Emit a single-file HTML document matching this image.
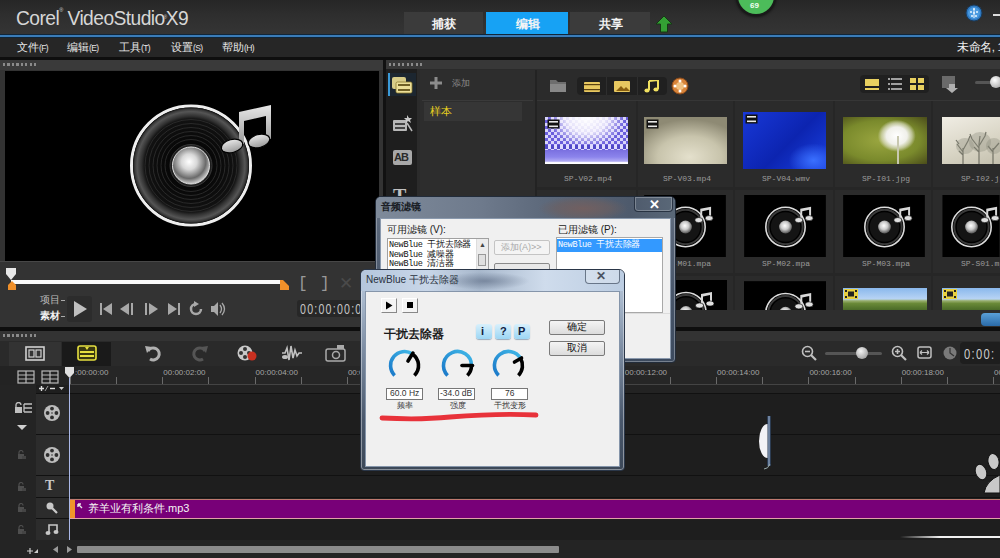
<!DOCTYPE html>
<html><head><meta charset="utf-8">
<style>
*{margin:0;padding:0;box-sizing:border-box}
html,body{width:1000px;height:558px;overflow:hidden;background:#1b1b1b;font-family:"Liberation Sans",sans-serif}
.a{position:absolute}
.t{position:absolute;white-space:nowrap;line-height:1}
</style></head><body>
<!-- title bar -->
<div class="a" style="left:0;top:0;width:1000px;height:36px;background:linear-gradient(#262626,#2e2e2e 40%,#353535)"></div>
<div class="t" style="left:16px;top:7px;font-size:21px;color:#d6d6d6;letter-spacing:-0.6px;transform:scaleX(0.915);transform-origin:0 0">Corel<span style="font-size:6px;vertical-align:top">®</span> VideoStudio<span style="font-size:5px;vertical-align:6px;margin:0 -1px">®</span>X9</div>
<!-- tabs -->
<div class="a" style="left:404px;top:12px;width:79px;height:24px;background:#3b3b3b"></div>
<div class="a" style="left:486px;top:12px;width:82px;height:24px;background:#17a2f4"></div>
<div class="a" style="left:570px;top:12px;width:80px;height:24px;background:#3b3b3b"></div>
<div class="t" style="left:432px;top:18px;font-size:12px;color:#f4f4f4;font-weight:bold">捕获</div>
<div class="t" style="left:516px;top:18px;font-size:12px;color:#f4f4f4;font-weight:bold">编辑</div>
<div class="t" style="left:599px;top:18px;font-size:12px;color:#f4f4f4;font-weight:bold">共享</div>
<svg class="a" style="left:655px;top:15px" width="18" height="18" viewBox="0 0 18 18"><path d="M9 1L17 9H12.5V17H5.5V9H1z" fill="#34a034" stroke="#143a14" stroke-width="1"/></svg>
<!-- green circle -->
<div class="a" style="left:738px;top:-22px;width:36px;height:36px;border-radius:50%;background:#4cbc5a;box-shadow:0 0 0 2px #1a1a1a,0 1px 3px 2px rgba(0,0,0,0.6)"></div>
<div class="t" style="left:750px;top:2px;font-size:8px;color:#f0fff0;font-weight:bold">69</div>
<!-- globe -->
<svg class="a" style="left:965px;top:4px" width="18" height="18" viewBox="0 0 18 18"><circle cx="9" cy="9" r="8" fill="#2e78c0" stroke="#1a3a5a" stroke-width="1"/><circle cx="9" cy="9" r="6" fill="#4a9ae0"/><g fill="#e8f4ff"><circle cx="9" cy="5" r="1"/><circle cx="6" cy="8" r="1"/><circle cx="12" cy="8" r="1"/><circle cx="9" cy="9" r="1"/><circle cx="7" cy="12" r="1"/><circle cx="11" cy="12" r="1"/><rect x="8.5" y="5" width="1" height="9"/></g></svg>
<div class="a" style="left:993px;top:14px;width:7px;height:2px;background:#ddd"></div>
<!-- blue line -->
<div class="a" style="left:0;top:34px;width:1000px;height:4px;background:#10263a"></div><div class="a" style="left:0;top:35px;width:1000px;height:2px;background:#3a7cb8"></div>
<!-- menu bar -->
<div class="a" style="left:0;top:38px;width:1000px;height:20px;background:#262626"></div>
<div class="t" style="left:17px;top:42px;font-size:11px;color:#e6e6e6">文件<span style="font-size:8.5px;letter-spacing:-0.6px">(F)</span></div>
<div class="t" style="left:67px;top:42px;font-size:11px;color:#e6e6e6">编辑<span style="font-size:8.5px;letter-spacing:-0.6px">(E)</span></div>
<div class="t" style="left:119px;top:42px;font-size:11px;color:#e6e6e6">工具<span style="font-size:8.5px;letter-spacing:-0.6px">(T)</span></div>
<div class="t" style="left:171px;top:42px;font-size:11px;color:#e6e6e6">设置<span style="font-size:8.5px;letter-spacing:-0.6px">(S)</span></div>
<div class="t" style="left:222px;top:42px;font-size:11px;color:#e6e6e6">帮助<span style="font-size:8.5px;letter-spacing:-0.6px">(H)</span></div>
<div class="t" style="left:957px;top:42px;font-size:11.5px;color:#f0f0f0;letter-spacing:-0.4px">未命名, 1</div>
<div class="a" style="left:0;top:57px;width:1000px;height:3px;background:#0e0e0e"></div>

<!-- PREVIEW PANEL -->
<div class="a" style="left:0;top:60px;width:383px;height:268px;background:#333"></div>
<div class="a" style="left:0;top:60px;width:383px;height:10px;background:#3a3a3a"></div>
<div class="a" style="left:5px;top:71px;width:374px;height:190px;background:#000"></div>

<!-- preview header dots -->
<div class="a" style="left:3px;top:63px;width:36px;height:3px;background:repeating-linear-gradient(90deg,#8a8a8a 0 2px,transparent 2px 4.5px)"></div>
<!-- speaker graphic -->
<svg class="a" style="left:5px;top:71px" width="374" height="190" viewBox="5 71 374 190">
<defs>
<radialGradient id="spk" cx="0.5" cy="0.5" r="0.5">
<stop offset="0" stop-color="#000"/><stop offset="0.5" stop-color="#0a0a0a"/><stop offset="0.8" stop-color="#121212"/><stop offset="0.85" stop-color="#303030"/><stop offset="0.93" stop-color="#555"/><stop offset="0.97" stop-color="#3a3a3a"/><stop offset="1" stop-color="#151515"/>
</radialGradient>
<linearGradient id="band" x1="0" y1="0" x2="0.3" y2="1"><stop offset="0" stop-color="#5a5a5a"/><stop offset="0.5" stop-color="#3e3e3e"/><stop offset="1" stop-color="#4a4a4a"/></linearGradient>
<radialGradient id="cap" cx="0.45" cy="0.4" r="0.6">
<stop offset="0" stop-color="#ffffff"/><stop offset="0.35" stop-color="#d8d8d8"/><stop offset="0.75" stop-color="#6a6a6a"/><stop offset="1" stop-color="#cfcfcf"/>
</radialGradient>
<linearGradient id="note" x1="0" y1="0" x2="0" y2="1">
<stop offset="0" stop-color="#e8e8e8"/><stop offset="1" stop-color="#9a9a9a"/>
</linearGradient>
</defs>
<circle cx="191" cy="165.5" r="59.5" fill="#000" stroke="#eeeeee" stroke-width="3"/>
<circle cx="191" cy="165.5" r="58" fill="url(#spk)"/>
<g fill="none" stroke="#2c2c2c" stroke-width="0.9">
<circle cx="191" cy="165.5" r="46"/><circle cx="191" cy="165.5" r="42"/><circle cx="191" cy="165.5" r="38"/><circle cx="191" cy="165.5" r="34"/><circle cx="191" cy="165.5" r="30"/><circle cx="191" cy="165.5" r="26"/>
</g>
<circle cx="191" cy="165.5" r="21" fill="#1e1e1e" stroke="#3a3a3a" stroke-width="1"/>
<circle cx="191" cy="165.5" r="18.5" fill="url(#cap)" stroke="#e0e0e0" stroke-width="1"/>
<path d="M239 112 L271 105 L271 139 L266 139 L266 116 L244 121 L244 144 L239 144 Z" fill="url(#note)"/>
<ellipse cx="232" cy="146" rx="11" ry="6.5" transform="rotate(-15 232 146)" fill="url(#note)" stroke="#000" stroke-width="1.2"/>
<ellipse cx="259" cy="141" rx="11" ry="6.5" transform="rotate(-15 259 141)" fill="url(#note)" stroke="#000" stroke-width="1.2"/>
</svg>
<!-- controls -->
<div class="a" style="left:0;top:261px;width:383px;height:1px;background:#474747"></div>
<div class="a" style="left:11px;top:280px;width:270px;height:4px;background:#fafafa"></div>
<svg class="a" style="left:5px;top:267px" width="12" height="24" viewBox="0 0 12 24"><path d="M1 1h10v6l-5 6l-5-6z" fill="#e8e8e8"/><path d="M3 23h8v-5l-4-4l-4 4z" fill="#f0902a"/></svg>
<svg class="a" style="left:279px;top:279px" width="11" height="12" viewBox="0 0 11 12"><path d="M1 1h3l6 6v4h-9z" fill="#f0902a"/></svg>
<div class="t" style="left:298px;top:276px;font-size:16px;color:#9a9a9a;font-family:'Liberation Mono',monospace">[</div>
<div class="t" style="left:320px;top:276px;font-size:16px;color:#9a9a9a;font-family:'Liberation Mono',monospace">]</div>
<div class="t" style="left:339px;top:275px;font-size:17px;color:#4a4a4a">✕</div>
<div class="t" style="left:40px;top:295px;font-size:10px;color:#bdbdbd">项目</div>
<div class="t" style="left:40px;top:311px;font-size:10px;color:#f2f2f2;font-weight:bold">素材</div>
<div class="a" style="left:61px;top:300px;width:4px;height:1px;background:#aaa"></div>
<div class="a" style="left:61px;top:316px;width:4px;height:1px;background:#aaa"></div>
<div class="a" style="left:67px;top:296px;width:25px;height:26px;background:#2c2c2c;border-radius:3px"></div>
<svg class="a" style="left:70px;top:298px" width="20" height="22" viewBox="0 0 20 22"><path d="M4 3L17 11L4 19z" fill="#bfbfbf"/></svg>
<svg class="a" style="left:98px;top:302px" width="100" height="14" viewBox="0 0 100 14" fill="#a8a8a8">
<rect x="2" y="1" width="2" height="12"/><path d="M14 1L5 7l9 6z"/>
<path d="M31 1L22 7l9 6z"/><rect x="33" y="1" width="2" height="12"/>
<rect x="47" y="1" width="2" height="12"/><path d="M51 1l9 6l-9 6z"/>
<path d="M70 1l9 6l-9 6z"/><rect x="80" y="1" width="2" height="12"/>
</svg>
<svg class="a" style="left:186px;top:300px" width="40" height="18" viewBox="0 0 40 18">
<path d="M10 4a5 5 0 1 0 5 5" fill="none" stroke="#a8a8a8" stroke-width="2.5"/><path d="M8 1l5 3l-5 3z" fill="#a8a8a8"/>
<path d="M25 6h3l4-4v14l-4-4h-3z" fill="#a8a8a8"/><path d="M34 5q3 4 0 8M36 3q5 6 0 12" fill="none" stroke="#a8a8a8" stroke-width="1.3"/>
</svg>
<div class="a" style="left:297px;top:300px;width:86px;height:17px;background:#272727;border-radius:3px"></div>
<div class="t" style="left:300px;top:302px;font-size:14px;color:#c4c4c4;letter-spacing:1.6px;transform:scaleX(0.76);transform-origin:0 0">00:00:00:00</div>

<!-- gap -->
<div class="a" style="left:383px;top:60px;width:3px;height:268px;background:#111"></div>

<!-- LIBRARY PANEL -->
<div class="a" style="left:386px;top:60px;width:614px;height:268px;background:#2b2b2b"></div>
<div class="a" style="left:386px;top:60px;width:614px;height:9px;background:#383838"></div>
<div class="a" style="left:386px;top:69px;width:31px;height:241px;background:#1e1e1e"></div>
<div class="a" style="left:420px;top:70px;width:115px;height:240px;background:#2d2d2d"></div>


<div class="a" style="left:389px;top:63px;width:36px;height:3px;background:repeating-linear-gradient(90deg,#8a8a8a 0 2px,transparent 2px 4.5px)"></div>
<!-- left icon column -->
<div class="a" style="left:388px;top:73px;width:28px;height:23px;background:#1c2630"></div>
<div class="a" style="left:388px;top:73px;width:2px;height:23px;background:#3a9ad8"></div>
<svg class="a" style="left:391px;top:74px" width="24" height="22" viewBox="0 0 24 22">
<rect x="1" y="3" width="14" height="12" rx="2" fill="#d8cc88"/><rect x="5" y="8" width="16" height="11" rx="1.5" fill="#ecdf98" stroke="#8a7a30" stroke-width="0.8"/>
<rect x="7" y="10" width="12" height="2" fill="#5a4a10" opacity="0.85"/><rect x="7" y="15" width="12" height="2" fill="#5a4a10" opacity="0.85"/>
</svg>
<svg class="a" style="left:392px;top:113px" width="22" height="20" viewBox="0 0 22 20">
<rect x="1" y="7" width="14" height="11" rx="1" fill="#b8b8b8"/><rect x="3" y="10" width="10" height="2" fill="#444"/><rect x="3" y="14" width="10" height="2" fill="#444"/>
<path d="M15 2l2 3l3 0l-2 2l1 3l-3-2l-2 2l0-3l-2-2l3 0z" fill="#c8c8c8"/><path d="M15 10l5 8" stroke="#bbb" stroke-width="1.5"/>
</svg>
<div class="a" style="left:393px;top:150px;width:19px;height:15px;background:#a8a8a8;border-radius:2px"></div>
<div class="t" style="left:394px;top:152px;font-size:11px;color:#2a2a2a;font-weight:bold;letter-spacing:-1px">AB</div>
<div class="t" style="left:393px;top:186px;font-size:20px;color:#c0c0c0;font-weight:bold;font-family:'Liberation Serif',serif">T</div>
<!-- folder panel -->
<svg class="a" style="left:430px;top:77px" width="12" height="12" viewBox="0 0 12 12"><path d="M4.5 0h3v4.5H12v3H7.5V12h-3V7.5H0v-3h4.5z" fill="#8c8c8c"/></svg>
<div class="t" style="left:452px;top:79px;font-size:9px;color:#8a8a8a">添加</div>
<div class="a" style="left:422px;top:100px;width:111px;height:1px;background:#3a3a3a"></div>
<div class="a" style="left:424px;top:102px;width:98px;height:19px;background:#363636"></div>
<div class="t" style="left:430px;top:106px;font-size:11px;color:#e8d020">样本</div>
<div class="a" style="left:535px;top:70px;width:2px;height:240px;background:#232323"></div>
<!-- top toolbar of thumbnails -->
<div class="a" style="left:537px;top:100px;width:463px;height:1px;background:#363636"></div>
<svg class="a" style="left:549px;top:78px" width="18" height="15" viewBox="0 0 18 15"><path d="M1 2h6l2 2h8v10H1z" fill="#6e6e6e"/><path d="M1 6h16v8H1z" fill="#888"/></svg>
<div class="a" style="left:577px;top:77px;width:90px;height:18px;background:#202020;border-radius:4px"></div>
<div class="a" style="left:606px;top:77px;width:1px;height:18px;background:#2e2e2e"></div>
<div class="a" style="left:637px;top:77px;width:1px;height:18px;background:#2e2e2e"></div>
<svg class="a" style="left:583px;top:80px" width="80" height="13" viewBox="0 0 80 13">
<rect x="1" y="2" width="16" height="10" rx="1" fill="#e8c860"/><rect x="1" y="4" width="16" height="1.2" fill="#5a4010"/><rect x="1" y="9" width="16" height="1.2" fill="#5a4010"/>
<rect x="31" y="1" width="16" height="11" rx="1" fill="#e8c860"/><path d="M33 11l5-5l3 3l2-2l4 4z" fill="#8a6010"/>
<path d="M66 1l9-1v9" fill="none" stroke="#f0e060" stroke-width="2"/><path d="M66 1v9" stroke="#f0e060" stroke-width="2"/><ellipse cx="64" cy="10.5" rx="2.6" ry="2" fill="#f0e060"/><ellipse cx="73" cy="9.5" rx="2.6" ry="2" fill="#f0e060"/>
</svg>
<svg class="a" style="left:671px;top:77px" width="18" height="18" viewBox="0 0 18 18"><circle cx="9" cy="9" r="8" fill="#d8843a" stroke="#8a4a1a" stroke-width="1"/><circle cx="9" cy="9" r="4" fill="#f0c080"/><circle cx="9" cy="4" r="1.5" fill="#fff"/><circle cx="14" cy="9" r="1.5" fill="#fff"/><circle cx="9" cy="14" r="1.5" fill="#fff"/><circle cx="4" cy="9" r="1.5" fill="#fff"/></svg>
<!-- view buttons -->
<div class="a" style="left:860px;top:75px;width:69px;height:18px;background:#202020;border-radius:4px"></div>
<div class="a" style="left:865px;top:79px;width:14px;height:7px;background:#e8d060"></div>
<div class="a" style="left:865px;top:88px;width:14px;height:2px;background:#e8d060"></div>
<svg class="a" style="left:888px;top:78px" width="14" height="12" viewBox="0 0 14 12" fill="#a0a0a0"><rect x="0" y="0" width="2" height="2"/><rect x="3" y="0" width="11" height="2"/><rect x="0" y="5" width="2" height="2"/><rect x="3" y="5" width="11" height="2"/><rect x="0" y="10" width="2" height="2"/><rect x="3" y="10" width="11" height="2"/></svg>
<svg class="a" style="left:910px;top:78px" width="14" height="12" viewBox="0 0 14 12" fill="#e8d060"><rect x="0" y="0" width="6" height="5"/><rect x="8" y="0" width="6" height="5"/><rect x="0" y="7" width="6" height="5"/><rect x="8" y="7" width="6" height="5"/></svg>
<svg class="a" style="left:941px;top:75px" width="18" height="19" viewBox="0 0 18 19"><rect x="1" y="1" width="13" height="12" fill="#6a6a6a"/><path d="M8 9h6v4h3l-6 5l-6-5h3z" fill="#b0b0b0"/></svg>
<div class="a" style="left:975px;top:81px;width:25px;height:3px;background:#555;border-radius:2px"></div>
<div class="a" style="left:990px;top:76px;width:12px;height:12px;border-radius:50%;background:radial-gradient(circle at 40% 35%,#fff,#999)"></div>


<svg width="0" height="0" style="position:absolute"><defs>
<radialGradient id="mcap" cx="0.45" cy="0.4" r="0.6"><stop offset="0" stop-color="#fff"/><stop offset="0.5" stop-color="#ccc"/><stop offset="1" stop-color="#555"/></radialGradient>
<g id="mus">
<circle cx="42" cy="32.5" r="20" fill="#000" stroke="#dcdcdc" stroke-width="1.6"/>
<circle cx="42" cy="32.5" r="17.5" fill="none" stroke="#3a3a3a" stroke-width="2"/>
<circle cx="42" cy="32.5" r="15" fill="#141414"/>
<circle cx="42" cy="32.5" r="6.5" fill="url(#mcap)"/>
<path d="M57 14l11-2v12h-2v-9l-7 1.5v10h-2z" fill="#d8d8d8"/>
<ellipse cx="55.5" cy="25.5" rx="4" ry="2.6" fill="#e0e0e0" stroke="#000" stroke-width="0.6"/>
<ellipse cx="66" cy="23.5" rx="4" ry="2.6" fill="#e0e0e0" stroke="#000" stroke-width="0.6"/>
</g>
<g id="film"><rect x="0" y="0" width="12" height="9" fill="#111"/><rect x="1.5" y="1.5" width="9" height="1.6" fill="#e8e8e8"/><rect x="1.5" y="6" width="9" height="1.6" fill="#e8e8e8"/></g>
</defs></svg>
<!-- cell dividers -->
<div class="a" style="left:636px;top:101px;width:2px;height:209px;background:#262626"></div>
<div class="a" style="left:733px;top:101px;width:2px;height:209px;background:#262626"></div>
<div class="a" style="left:833px;top:101px;width:2px;height:209px;background:#262626"></div>
<div class="a" style="left:931px;top:101px;width:2px;height:209px;background:#262626"></div>
<div class="a" style="left:537px;top:187px;width:463px;height:3px;background:#262626"></div>
<div class="a" style="left:537px;top:273px;width:463px;height:3px;background:#262626"></div>
<!-- row1 thumbs -->
<div class="a" style="left:545px;top:117px;width:83px;height:47px;background:radial-gradient(ellipse 55% 75% at 50% 0%,rgba(255,255,255,1),rgba(250,248,255,0.85) 45%,rgba(255,255,255,0) 85%),repeating-conic-gradient(#6a5edc 0 25%,#d8d4fa 0 50%) 0 0/6px 6px"></div>
<div class="a" style="left:545px;top:150px;width:83px;height:14px;background:linear-gradient(#7a70e0,#8c84ec 50%,#b0aaf4 80%,#fff 90%,#fff)"></div>
<div class="a" style="left:545px;top:145px;width:83px;height:4px;background:repeating-linear-gradient(90deg,#5048c8 0 3px,#e0dcff 3px 6px)"></div>
<div class="a" style="left:644px;top:117px;width:83px;height:47px;background:radial-gradient(ellipse 70% 80% at 55% 85%,#e4e0cc,#c8c4ac 55%,#8e8a74)"></div>
<div class="a" style="left:743px;top:112px;width:83px;height:57px;background:radial-gradient(ellipse 30% 30% at 85% 85%,#3a70ff,rgba(40,80,240,0) 100%),linear-gradient(135deg,#1838d8,#0c24b0 55%,#1a40e0)"></div>
<div class="a" style="left:843px;top:117px;width:84px;height:47px;background:radial-gradient(ellipse 19px 16px at 64% 40%,#ffffff,#f0f0ea 55%,rgba(230,230,215,0.6) 80%,rgba(200,200,180,0) 100%),radial-gradient(ellipse at 45% 50%,#9aa640,#7a8a2c 60%,#4a4c1a)"></div>
<div class="a" style="left:897px;top:136px;width:1.5px;height:28px;background:#c8c8b0"></div>
<div class="a" style="left:942px;top:117px;width:58px;height:47px;background:linear-gradient(160deg,#f0ede4,#d8d4c4 60%,#c4c0ae)"></div>
<svg class="a" style="left:955px;top:130px" width="45" height="34" viewBox="0 0 45 34"><g fill="none" stroke="#6a6a5e" stroke-width="1.2" opacity="0.9"><path d="M8 34V18M8 22l-6-8M8 20l5-9M8 25l-4-4M4 14l-3-4M13 11l2-5"/><path d="M24 34V14M24 18l-7-9M24 16l6-10M24 22l-5-5M17 9l-2-5M30 6l1-4M24 14l1-8"/><path d="M38 34V18M38 22l-5-6M38 20l6-7"/></g><ellipse cx="10" cy="16" rx="9" ry="8" fill="#8a8a7a" opacity="0.35"/><ellipse cx="25" cy="12" rx="11" ry="10" fill="#8a8a7a" opacity="0.35"/><ellipse cx="39" cy="16" rx="8" ry="8" fill="#8a8a7a" opacity="0.35"/></svg>
<svg class="a" style="left:547px;top:119px" width="14" height="10"><use href="#film" x="0.5" y="0.5"/></svg>
<svg class="a" style="left:646px;top:119px" width="14" height="10"><use href="#film" x="0.5" y="0.5"/></svg>
<svg class="a" style="left:745px;top:114px" width="14" height="10"><use href="#film" x="0.5" y="0.5"/></svg>
<div class="t" style="left:564px;top:175px;font-size:8px;color:#9a9a9a;font-family:'Liberation Mono',monospace">SP-V02.mp4</div>
<div class="t" style="left:663px;top:175px;font-size:8px;color:#9a9a9a;font-family:'Liberation Mono',monospace">SP-V03.mp4</div>
<div class="t" style="left:762px;top:175px;font-size:8px;color:#9a9a9a;font-family:'Liberation Mono',monospace">SP-V04.wmv</div>
<div class="t" style="left:862px;top:175px;font-size:8px;color:#9a9a9a;font-family:'Liberation Mono',monospace">SP-I01.jpg</div>
<div class="t" style="left:961px;top:175px;font-size:8px;color:#9a9a9a;font-family:'Liberation Mono',monospace">SP-I02.jpg</div>
<!-- row2 -->
<svg class="a" style="left:644px;top:195px" width="82" height="62" viewBox="0 0 83 63"><rect width="83" height="63" fill="#000"/><use href="#mus" x="0.0" y="0"/></svg>
<svg class="a" style="left:744px;top:195px" width="82" height="62" viewBox="0 0 83 63"><rect width="83" height="63" fill="#000"/><use href="#mus" x="0.0" y="0"/></svg>
<svg class="a" style="left:843px;top:195px" width="82" height="62" viewBox="0 0 83 63"><rect width="83" height="63" fill="#000"/><use href="#mus" x="0.0" y="0"/></svg>
<svg class="a" style="left:942px;top:195px" width="58" height="62" viewBox="0 0 58 63"><rect width="58" height="63" fill="#000"/><use href="#mus" x="-12.5" y="0"/></svg>

<div class="t" style="left:663px;top:260px;font-size:8px;color:#9a9a9a;font-family:'Liberation Mono',monospace">SP-M01.mpa</div>
<div class="t" style="left:762px;top:260px;font-size:8px;color:#9a9a9a;font-family:'Liberation Mono',monospace">SP-M02.mpa</div>
<div class="t" style="left:862px;top:260px;font-size:8px;color:#9a9a9a;font-family:'Liberation Mono',monospace">SP-M03.mpa</div>
<div class="t" style="left:961px;top:260px;font-size:8px;color:#9a9a9a;font-family:'Liberation Mono',monospace">SP-S01.mpa</div>
<!-- row3 -->
<svg class="a" style="left:644px;top:280px" width="83" height="30" viewBox="0 0 83 30"><rect width="83" height="63" fill="#000"/><use href="#mus" x="0.0" y="0"/></svg>
<svg class="a" style="left:744px;top:281px" width="82" height="30" viewBox="0 0 83 30"><rect width="83" height="63" fill="#000"/><use href="#mus" x="0.0" y="0"/></svg>

<div class="a" style="left:843px;top:288px;width:84px;height:22px;background:linear-gradient(#8ab8ec,#b8d4f4 50%,#9ab070 58%,#6a8a38 70%,#4a6a28)"></div>
<div class="a" style="left:942px;top:288px;width:58px;height:22px;background:linear-gradient(#8ab8ec,#b8d4f4 50%,#9ab070 58%,#6a8a38 70%,#4a6a28)"></div>
<svg class="a" style="left:844px;top:289px" width="14" height="10" viewBox="0 0 14 10"><rect width="14" height="10" fill="#e8d040"/><rect x="1" y="1" width="2" height="2" fill="#222"/><rect x="1" y="7" width="2" height="2" fill="#222"/><rect x="11" y="1" width="2" height="2" fill="#222"/><rect x="11" y="7" width="2" height="2" fill="#222"/><rect x="4" y="2.5" width="6" height="5" fill="#222"/></svg>
<svg class="a" style="left:943px;top:289px" width="14" height="10" viewBox="0 0 14 10"><rect width="14" height="10" fill="#e8d040"/><rect x="1" y="1" width="2" height="2" fill="#222"/><rect x="1" y="7" width="2" height="2" fill="#222"/><rect x="11" y="1" width="2" height="2" fill="#222"/><rect x="11" y="7" width="2" height="2" fill="#222"/><rect x="4" y="2.5" width="6" height="5" fill="#222"/></svg>
<!-- library bottom bar -->
<div class="a" style="left:537px;top:310px;width:463px;height:17px;background:#2e2e2e"></div>
<div class="a" style="left:386px;top:310px;width:151px;height:17px;background:#2b2b2b"></div>
<div class="a" style="left:981px;top:313px;width:22px;height:13px;background:linear-gradient(#5aa0d8,#2a6aa8);border-radius:4px"></div>

<!-- black line -->
<div class="a" style="left:0;top:327px;width:1000px;height:4px;background:#0e0e0e"></div>

<!-- TIMELINE -->
<div class="a" style="left:0;top:331px;width:1000px;height:10px;background:#333"></div>
<div class="a" style="left:0;top:341px;width:1000px;height:25px;background:#2a2a2a"></div>
<div class="a" style="left:0;top:366px;width:1000px;height:19px;background:#262626"></div>
<div class="a" style="left:0;top:385px;width:1000px;height:173px;background:#1e1e1e"></div>


<div class="a" style="left:3px;top:334px;width:36px;height:3px;background:repeating-linear-gradient(90deg,#8a8a8a 0 2px,transparent 2px 4.5px)"></div>
<!-- toolbar buttons -->
<div class="a" style="left:9px;top:342px;width:52px;height:24px;background:#333"></div>
<div class="a" style="left:62px;top:342px;width:49px;height:24px;background:#1a1a1a"></div>
<svg class="a" style="left:25px;top:346px" width="20" height="15" viewBox="0 0 20 15"><rect x="1" y="1" width="18" height="13" fill="none" stroke="#d0d0d0" stroke-width="1.6"/><rect x="4" y="4" width="5" height="7" fill="none" stroke="#d0d0d0" stroke-width="1.2"/><rect x="11" y="4" width="5" height="7" fill="none" stroke="#d0d0d0" stroke-width="1.2"/></svg>
<svg class="a" style="left:77px;top:345px" width="20" height="16" viewBox="0 0 20 16"><rect x="1" y="1" width="18" height="14" rx="2" fill="#3a3810" stroke="#e6e040" stroke-width="1.6"/><rect x="3" y="6" width="14" height="2" fill="#e6e040"/><rect x="3" y="10" width="14" height="2" fill="#e6e040"/><path d="M8 2h4l-2 3z" fill="#e6e040"/></svg>
<svg class="a" style="left:144px;top:344px" width="18" height="18" viewBox="0 0 18 18"><path d="M4 7a6 6 0 1 1 2 8" fill="none" stroke="#b0b0b0" stroke-width="3"/><path d="M1 2l7 1l-5 6z" fill="#b0b0b0"/></svg>
<svg class="a" style="left:191px;top:344px" width="18" height="18" viewBox="0 0 18 18"><path d="M14 7a6 6 0 1 0 -2 8" fill="none" stroke="#555" stroke-width="3"/><path d="M17 2l-7 1l5 6z" fill="#555"/></svg>
<svg class="a" style="left:236px;top:344px" width="22" height="18" viewBox="0 0 22 18"><circle cx="9" cy="9" r="7.5" fill="#c8c8c8"/><circle cx="9" cy="5" r="2" fill="#333"/><circle cx="5" cy="9" r="2" fill="#333"/><circle cx="13" cy="9" r="2" fill="#333"/><circle cx="9" cy="13" r="2" fill="#333"/><circle cx="16" cy="12" r="4.5" fill="#c83020"/></svg>
<svg class="a" style="left:281px;top:344px" width="22" height="18" viewBox="0 0 22 18"><path d="M1 9h3l2-5l2 12l2-14l2 12l2-8l2 6l2-3h3" fill="none" stroke="#c0c0c0" stroke-width="1.6"/><ellipse cx="4" cy="13" rx="3" ry="2" fill="#c0c0c0"/></svg>
<svg class="a" style="left:325px;top:344px" width="22" height="18" viewBox="0 0 22 18"><rect x="1" y="5" width="19" height="12" rx="2" fill="none" stroke="#aaa" stroke-width="1.5"/><circle cx="11" cy="11" r="3.5" fill="none" stroke="#aaa" stroke-width="1.5"/><rect x="12" y="1" width="7" height="4" fill="#aaa"/></svg>
<!-- right toolbar -->
<svg class="a" style="left:801px;top:345px" width="16" height="16" viewBox="0 0 16 16"><circle cx="6.5" cy="6.5" r="5" fill="none" stroke="#c0c0c0" stroke-width="1.6"/><path d="M4 6.5h5" stroke="#c0c0c0" stroke-width="1.6"/><path d="M10 10l5 5" stroke="#c0c0c0" stroke-width="2.2"/></svg>
<div class="a" style="left:825px;top:352px;width:57px;height:3px;background:#555;border-radius:2px"></div>
<div class="a" style="left:856px;top:347px;width:12px;height:12px;border-radius:50%;background:radial-gradient(circle at 40% 35%,#f4f4f4,#8a8a8a)"></div>
<svg class="a" style="left:891px;top:345px" width="16" height="16" viewBox="0 0 16 16"><circle cx="6.5" cy="6.5" r="5" fill="none" stroke="#c0c0c0" stroke-width="1.6"/><path d="M4 6.5h5M6.5 4v5" stroke="#c0c0c0" stroke-width="1.6"/><path d="M10 10l5 5" stroke="#c0c0c0" stroke-width="2.2"/></svg>
<svg class="a" style="left:917px;top:346px" width="15" height="13" viewBox="0 0 15 13"><rect x="1" y="1" width="13" height="11" rx="2" fill="none" stroke="#c0c0c0" stroke-width="1.5"/><path d="M3 6.5h9M3 6.5l2-2M3 6.5l2 2M12 6.5l-2-2M12 6.5l-2 2" stroke="#c0c0c0" stroke-width="1.2"/></svg>
<svg class="a" style="left:943px;top:346px" width="14" height="14" viewBox="0 0 14 14"><circle cx="7" cy="7" r="6.5" fill="#7a7a7a"/><path d="M7 2v5l4 3" fill="none" stroke="#333" stroke-width="1.2"/></svg>
<div class="a" style="left:960px;top:342px;width:42px;height:22px;background:#1e1e1e;border-radius:4px"></div>
<div class="t" style="left:964px;top:347px;font-size:14px;color:#cccccc;letter-spacing:1.6px;transform:scaleX(0.8);transform-origin:0 0">0:00:</div>
<!-- ruler -->
<div class="a" style="left:0;top:366px;width:70px;height:19px;background:#232323"></div>
<svg class="a" style="left:17px;top:370px" width="44" height="14" viewBox="0 0 44 14" fill="none" stroke="#b8b8b8" stroke-width="1.2"><rect x="1" y="1" width="16" height="12"/><path d="M1 5h16M1 9h16M9 1v12"/><rect x="25" y="1" width="16" height="12"/><path d="M25 5h16M25 9h16M33 1v12"/></svg>
<div class="a" style="left:70px;top:384px;width:930px;height:1px;background:#444"></div>
<div class="a" style="left:70px;top:385px;width:930px;height:8px;background:#232323"></div>
<svg class="a" style="left:38px;top:385px" width="28" height="7" viewBox="0 0 28 7"><path d="M1 3.5h5M3.5 1v5" stroke="#ddd" stroke-width="1.4"/><path d="M7 6l3-5" stroke="#bbb" stroke-width="0.8"/><path d="M12 3.5h5" stroke="#ddd" stroke-width="1.4"/><path d="M21 2h5l-2.5 3z" fill="#ccc"/></svg>
<div class="a" style="left:70.0px;top:377px;width:1px;height:7px;background:#6a6a6a"></div>
<div class="a" style="left:116.2px;top:377px;width:1px;height:7px;background:#6a6a6a"></div>
<div class="a" style="left:162.3px;top:377px;width:1px;height:7px;background:#6a6a6a"></div>
<div class="t" style="left:163.3px;top:369px;font-size:8px;color:#a4a4a4;letter-spacing:0px">00:00:02:00</div>
<div class="a" style="left:208.4px;top:377px;width:1px;height:7px;background:#6a6a6a"></div>
<div class="a" style="left:254.6px;top:377px;width:1px;height:7px;background:#6a6a6a"></div>
<div class="t" style="left:255.6px;top:369px;font-size:8px;color:#a4a4a4;letter-spacing:0px">00:00:04:00</div>
<div class="a" style="left:300.8px;top:377px;width:1px;height:7px;background:#6a6a6a"></div>
<div class="a" style="left:346.9px;top:377px;width:1px;height:7px;background:#6a6a6a"></div>
<div class="t" style="left:347.9px;top:369px;font-size:8px;color:#a4a4a4;letter-spacing:0px">00:00:06:00</div>
<div class="a" style="left:393.1px;top:377px;width:1px;height:7px;background:#6a6a6a"></div>
<div class="a" style="left:439.2px;top:377px;width:1px;height:7px;background:#6a6a6a"></div>
<div class="t" style="left:440.2px;top:369px;font-size:8px;color:#a4a4a4;letter-spacing:0px">00:00:08:00</div>
<div class="a" style="left:485.3px;top:377px;width:1px;height:7px;background:#6a6a6a"></div>
<div class="a" style="left:531.5px;top:377px;width:1px;height:7px;background:#6a6a6a"></div>
<div class="t" style="left:532.5px;top:369px;font-size:8px;color:#a4a4a4;letter-spacing:0px">00:00:10:00</div>
<div class="a" style="left:577.6px;top:377px;width:1px;height:7px;background:#6a6a6a"></div>
<div class="a" style="left:623.8px;top:377px;width:1px;height:7px;background:#6a6a6a"></div>
<div class="t" style="left:624.8px;top:369px;font-size:8px;color:#a4a4a4;letter-spacing:0px">00:00:12:00</div>
<div class="a" style="left:669.9px;top:377px;width:1px;height:7px;background:#6a6a6a"></div>
<div class="a" style="left:716.1px;top:377px;width:1px;height:7px;background:#6a6a6a"></div>
<div class="t" style="left:717.1px;top:369px;font-size:8px;color:#a4a4a4;letter-spacing:0px">00:00:14:00</div>
<div class="a" style="left:762.2px;top:377px;width:1px;height:7px;background:#6a6a6a"></div>
<div class="a" style="left:808.4px;top:377px;width:1px;height:7px;background:#6a6a6a"></div>
<div class="t" style="left:809.4px;top:369px;font-size:8px;color:#a4a4a4;letter-spacing:0px">00:00:16:00</div>
<div class="a" style="left:854.5px;top:377px;width:1px;height:7px;background:#6a6a6a"></div>
<div class="a" style="left:900.7px;top:377px;width:1px;height:7px;background:#6a6a6a"></div>
<div class="t" style="left:901.7px;top:369px;font-size:8px;color:#a4a4a4;letter-spacing:0px">00:00:18:00</div>
<div class="a" style="left:946.9px;top:377px;width:1px;height:7px;background:#6a6a6a"></div>
<div class="a" style="left:993.0px;top:377px;width:1px;height:7px;background:#6a6a6a"></div>
<div class="t" style="left:994.0px;top:369px;font-size:8px;color:#a4a4a4;letter-spacing:0px">00:00:20:00</div>
<div class="t" style="left:75px;top:369px;font-size:8px;color:#a4a4a4;letter-spacing:0px">:00:00:00</div>
<!-- track headers -->
<div class="a" style="left:0;top:385px;width:36px;height:155px;background:#242424"></div>
<div class="a" style="left:36px;top:393px;width:33px;height:147px;background:#2c2c2c"></div>
<div class="a" style="left:36px;top:393px;width:964px;height:1px;background:#111"></div>
<div class="a" style="left:36px;top:434px;width:964px;height:1px;background:#111"></div>
<div class="a" style="left:36px;top:475px;width:964px;height:1px;background:#111"></div>
<div class="a" style="left:36px;top:497px;width:964px;height:1px;background:#111"></div>
<div class="a" style="left:36px;top:518px;width:964px;height:1px;background:#111"></div>
<div class="a" style="left:36px;top:540px;width:964px;height:1px;background:#111"></div>

<svg class="a" style="left:42px;top:403px" width="20" height="20" viewBox="0 0 20 20"><circle cx="10" cy="10" r="8" fill="#bdbdbd"/><circle cx="10" cy="5.6" r="1.9" fill="#2e2e2e"/><circle cx="5.6" cy="10" r="1.9" fill="#2e2e2e"/><circle cx="14.4" cy="10" r="1.9" fill="#2e2e2e"/><circle cx="10" cy="14.4" r="1.9" fill="#2e2e2e"/><circle cx="10" cy="10" r="0.8" fill="#2e2e2e"/></svg>
<svg class="a" style="left:42px;top:445px" width="20" height="20" viewBox="0 0 20 20"><circle cx="10" cy="10" r="8" fill="#bdbdbd"/><circle cx="10" cy="5.6" r="1.9" fill="#2e2e2e"/><circle cx="5.6" cy="10" r="1.9" fill="#2e2e2e"/><circle cx="14.4" cy="10" r="1.9" fill="#2e2e2e"/><circle cx="10" cy="14.4" r="1.9" fill="#2e2e2e"/><circle cx="10" cy="10" r="0.8" fill="#2e2e2e"/></svg>
<div class="t" style="left:45px;top:479px;font-size:14px;color:#c8c8c8;font-family:'Liberation Serif',serif;font-weight:bold">T</div>
<svg class="a" style="left:45px;top:501px" width="14" height="14" viewBox="0 0 14 14"><circle cx="5" cy="5" r="3.5" fill="#c8c8c8"/><path d="M7 7l5 5" stroke="#c8c8c8" stroke-width="2.2"/></svg>
<svg class="a" style="left:44px;top:522px" width="16" height="14" viewBox="0 0 16 14"><path d="M5 11V3h8v7" fill="none" stroke="#c8c8c8" stroke-width="1.6"/><ellipse cx="4" cy="11" rx="2.5" ry="2" fill="#c8c8c8"/><ellipse cx="12" cy="10" rx="2.5" ry="2" fill="#c8c8c8"/></svg>
<svg class="a" style="left:14px;top:402px" width="20" height="32" viewBox="0 0 20 32"><rect x="1" y="5" width="7" height="6" fill="#c0c0c0"/><path d="M2 5V3a2.5 2.5 0 0 1 5 0" fill="none" stroke="#c0c0c0" stroke-width="1.3"/><path d="M10 2h8M10 6h8M10 10h8M10 2v8" stroke="#c0c0c0" stroke-width="1.3"/><path d="M3 23h10l-5 5z" fill="#d0d0d0"/></svg>
<svg class="a" style="left:17px;top:450px" width="10" height="10" viewBox="0 0 10 10"><rect x="1" y="4" width="6" height="5" fill="#4e4e4e"/><path d="M2 4V2.5a2 2 0 0 1 4 0" fill="none" stroke="#4e4e4e" stroke-width="1.2"/><rect x="5" y="6" width="4" height="3" fill="#444"/></svg>
<svg class="a" style="left:17px;top:482px" width="10" height="10" viewBox="0 0 10 10"><rect x="1" y="4" width="6" height="5" fill="#4e4e4e"/><path d="M2 4V2.5a2 2 0 0 1 4 0" fill="none" stroke="#4e4e4e" stroke-width="1.2"/><rect x="5" y="6" width="4" height="3" fill="#444"/></svg>
<svg class="a" style="left:17px;top:503px" width="10" height="10" viewBox="0 0 10 10"><rect x="1" y="4" width="6" height="5" fill="#4e4e4e"/><path d="M2 4V2.5a2 2 0 0 1 4 0" fill="none" stroke="#4e4e4e" stroke-width="1.2"/><rect x="5" y="6" width="4" height="3" fill="#444"/></svg>
<svg class="a" style="left:17px;top:525px" width="10" height="10" viewBox="0 0 10 10"><rect x="1" y="4" width="6" height="5" fill="#4e4e4e"/><path d="M2 4V2.5a2 2 0 0 1 4 0" fill="none" stroke="#4e4e4e" stroke-width="1.2"/><rect x="5" y="6" width="4" height="3" fill="#444"/></svg>

<!-- purple clip -->
<div class="a" style="left:70px;top:499px;width:930px;height:20px;background:#780078;border-top:1.5px solid #c07a70;border-bottom:1.5px solid #e0a0a8"></div>
<div class="a" style="left:70px;top:500px;width:5px;height:18px;background:#f0962a"></div>
<svg class="a" style="left:77px;top:503px" width="8" height="8" viewBox="0 0 8 8"><path d="M1 1l4 4M1 1h3M1 1v3" stroke="#e8e8e8" stroke-width="1.4" fill="none"/></svg>
<div class="t" style="left:88px;top:503px;font-size:11px;color:#f4f4f4">养羊业有利条件.mp3</div>
<!-- playhead -->
<div class="a" style="left:69px;top:378px;width:1px;height:162px;background:#aab8e8"></div>
<svg class="a" style="left:64px;top:366px" width="11" height="13" viewBox="0 0 11 13"><path d="M1 1h9v6l-4.5 5l-4.5-5z" fill="#e0e0e0"/></svg>
<!-- bottom bar -->
<div class="a" style="left:0;top:540px;width:1000px;height:18px;background:#242424"></div>
<div class="a" style="left:77px;top:546px;width:482px;height:7px;background:#8c8c8c;border-radius:1px"></div>
<div class="a" style="left:900px;top:536px;width:100px;height:2px;background:linear-gradient(90deg,rgba(255,255,255,0),#f0f0f0 40%)"></div>
<svg class="a" style="left:25px;top:543px" width="50" height="12" viewBox="0 0 50 12"><path d="M2 8h6M5 5v6" stroke="#ccc" stroke-width="1.2"/><path d="M9 10l4-4v4z" fill="#ccc"/><path d="M33 3v7l-5-3.5z" fill="#9a9a9a"/><path d="M42 3v7l5-3.5z" fill="#9a9a9a"/></svg>
<!-- transition thing -->
<svg class="a" style="left:756px;top:414px" width="18" height="58" viewBox="0 0 18 58"><rect x="11" y="2" width="4" height="50" fill="#2c3c52"/><rect x="12.3" y="2" width="1.4" height="50" fill="#8aa0c0"/><path d="M11.5 10a8.5 17 0 0 0 0 34z" fill="#f2f2f6"/><path d="M8 55q4 0 6-5" fill="none" stroke="#9aa" stroke-width="1"/></svg>
<!-- paw -->
<svg class="a" style="left:972px;top:450px" width="28" height="48" viewBox="0 0 28 48"><ellipse cx="9" cy="22" rx="5.5" ry="8" transform="rotate(-20 9 22)" fill="#c8c8c8" stroke="#111" stroke-width="1"/><ellipse cx="21.5" cy="11.5" rx="5.5" ry="8" transform="rotate(-10 21.5 11.5)" fill="#c8c8c8" stroke="#111" stroke-width="1"/><path d="M12 43q2-12 16-18v18q-8 0-16 0z" fill="#c8c8c8" stroke="#111" stroke-width="1"/></svg>


<!-- DIALOG 1 -->
<div class="a" style="left:375px;top:196px;width:301px;height:167px;border-radius:6px 6px 4px 4px;background:linear-gradient(180deg,#6a7688 0,#5a677a 30px,#4a586c 90px,#3c4a5e);border:1px solid #222c3a;box-shadow:inset 0 0 0 1px rgba(255,255,255,0.3)"></div>
<div class="a" style="left:376px;top:197px;width:299px;height:21px;border-radius:5px 5px 0 0;background:linear-gradient(90deg,#7e8a9a,#6e7a8c 35%,#5e6a7c 55%,#4e5a6c 85%,#5a6878)"></div>
<div class="a" style="left:538px;top:197px;width:90px;height:21px;background:radial-gradient(ellipse 50% 60% at 50% 55%,rgba(115,95,95,0.95),rgba(110,95,95,0.6) 60%,rgba(110,95,95,0) 100%)"></div>
<div class="a" style="left:634px;top:197px;width:39px;height:15px;border:1px solid rgba(30,40,55,0.8);border-top:none;border-radius:0 0 4px 4px;box-shadow:inset 0 0 0 1px rgba(255,255,255,0.25)"></div>
<div class="t" style="left:649px;top:198px;font-size:13px;color:#fff;font-weight:bold">✕</div>
<div class="t" style="left:381px;top:202px;font-size:10px;color:#1a1e26;font-weight:bold">音频滤镜</div>
<div class="a" style="left:380px;top:218px;width:291px;height:141px;background:#f0f0f0;border:1px solid #8a99ad"></div>
<div class="t" style="left:387px;top:225px;font-size:10px;color:#1a1a1a">可用滤镜 (V):</div>
<div class="a" style="left:387px;top:238px;width:102px;height:40px;background:#fff;border:1px solid #a0a0a0"></div>
<div class="t" style="left:389px;top:241px;font-size:8.5px;color:#111;font-family:'Liberation Mono',monospace;line-height:9.5px;letter-spacing:-0.3px">NewBlue 干扰去除器<br>NewBlue 减噪器<br>NewBlue 清洁器</div>
<div class="a" style="left:476px;top:239px;width:12px;height:38px;background:#ececec;border-left:1px solid #ddd"></div>
<div class="a" style="left:478px;top:254px;width:8px;height:12px;background:#e0e0e0;border:1px solid #999"></div>
<div class="t" style="left:479px;top:241px;font-size:7px;color:#444">▲</div>
<div class="a" style="left:494px;top:240px;width:56px;height:15px;background:#f4f4f4;border:1px solid #c4c4c4;border-radius:2px"></div>
<div class="t" style="left:501px;top:243px;font-size:9px;color:#a8a8a8">添加(A)&gt;&gt;</div>
<div class="a" style="left:494px;top:263px;width:56px;height:15px;background:#e8e8e8;border:1px solid #8a8a8a;border-radius:2px"></div>
<div class="t" style="left:558px;top:225px;font-size:10px;color:#1a1a1a">已用滤镜 (P):</div>
<div class="a" style="left:556px;top:237px;width:107px;height:76px;background:#fff;border:1px solid #a8a8a8"></div>
<div class="a" style="left:557px;top:239px;width:105px;height:13px;background:#3399ff"></div>
<div class="t" style="left:558px;top:241px;font-size:8.5px;color:#fff;font-family:'Liberation Mono',monospace;letter-spacing:-0.3px">NewBlue 干扰去除器</div>
<div class="a" style="left:381px;top:313px;width:289px;height:1px;background:#dcdcdc"></div>

<!-- DIALOG 2 -->
<div class="a" style="left:360px;top:269px;width:265px;height:202px;border-radius:6px 6px 4px 4px;background:linear-gradient(180deg,#b8c8dc 0,#a8b8cc 30px,#7c8ca2 80px,#4a586c 150px,#3c4858);border:1px solid #2a3648;box-shadow:inset 0 0 0 1px rgba(255,255,255,0.4)"></div>
<div class="a" style="left:361px;top:270px;width:263px;height:21px;border-radius:5px 5px 0 0;background:linear-gradient(90deg,#b4c6dc,#c8d6e8 25%,#a8b8cc 45%,#cfdcec 70%,#bccde2)"></div>
<div class="a" style="left:440px;top:272px;width:90px;height:18px;background:radial-gradient(ellipse at 50% 50%,rgba(80,95,120,0.55),rgba(80,95,120,0) 70%)"></div>
<div class="a" style="left:585px;top:270px;width:35px;height:14px;border:1px solid rgba(60,75,95,0.7);border-top:none;border-radius:0 0 4px 4px;background:rgba(255,255,255,0.25)"></div>
<div class="t" style="left:596px;top:270px;font-size:12px;color:#4a5260;font-weight:bold">✕</div>
<div class="t" style="left:366px;top:275px;font-size:10px;color:#2a3240">NewBlue 干扰去除器</div>
<div class="a" style="left:365px;top:291px;width:255px;height:176px;background:#f0f0f0;border:1px solid #8595aa"></div>
<!-- play stop -->
<div class="a" style="left:381px;top:298px;width:16px;height:15px;background:#f4f4f4;border:1px solid;border-color:#fff #888 #888 #fff"></div>
<div class="a" style="left:402px;top:298px;width:16px;height:15px;background:#f4f4f4;border:1px solid;border-color:#fff #888 #888 #fff"></div>
<svg class="a" style="left:385px;top:301px" width="8" height="9"><path d="M1 0.5L7.5 4.5L1 8.5z" fill="#000"/></svg>
<div class="a" style="left:407px;top:302px;width:6px;height:6px;background:#000"></div>
<div class="t" style="left:384px;top:329px;font-size:11.5px;color:#1a1a1a;font-weight:bold">干扰去除器</div>
<!-- i ? P -->
<div class="a" style="left:476px;top:324px;width:16px;height:15px;border-radius:3px;background:linear-gradient(#d8f0fc,#9cd6f4);box-shadow:0 1px 1px #9ab"></div>
<div class="a" style="left:495px;top:324px;width:16px;height:15px;border-radius:3px;background:linear-gradient(#d8f0fc,#9cd6f4);box-shadow:0 1px 1px #9ab"></div>
<div class="a" style="left:514px;top:324px;width:16px;height:15px;border-radius:3px;background:linear-gradient(#d8f0fc,#9cd6f4);box-shadow:0 1px 1px #9ab"></div>
<div class="t" style="left:481px;top:326px;font-size:11px;color:#102040;font-weight:bold">i</div>
<div class="t" style="left:500px;top:326px;font-size:11px;color:#102040;font-weight:bold">?</div>
<div class="t" style="left:518px;top:326px;font-size:11px;color:#102040;font-weight:bold">P</div>
<!-- ok cancel -->
<div class="a" style="left:549px;top:320px;width:56px;height:15px;border-radius:2px;border:1px solid #7a7a7a;background:linear-gradient(#f4f4f4,#dcdcdc)"></div>
<div class="a" style="left:549px;top:341px;width:56px;height:15px;border-radius:2px;border:1px solid #7a7a7a;background:linear-gradient(#f4f4f4,#dcdcdc)"></div>
<div class="t" style="left:567px;top:322px;font-size:10px;color:#111">确定</div>
<div class="t" style="left:567px;top:343px;font-size:10px;color:#111">取消</div>
<!-- knobs -->
<svg class="a" style="left:380px;top:345px" width="160" height="40" viewBox="380 345 160 40">
<defs><linearGradient id="kb" x1="0" y1="1" x2="1" y2="0"><stop offset="0" stop-color="#1a78c8"/><stop offset="1" stop-color="#40b8e8"/></linearGradient></defs>
<g fill="none" stroke-width="3.6" stroke-linecap="butt"><path d="M394.6 375.4 A14 14 0 0 1 412.3 353.9" stroke="url(#kb)"/><path d="M412.3 353.9 A14 14 0 0 1 414.4 375.4" stroke="#000"/><path d="M408 361 L412.9 353.1" stroke="#000" stroke-linecap="round"/><path d="M447.6 375.4 A14 14 0 1 1 471.5 365.5" stroke="url(#kb)"/><path d="M471.5 365.5 A14 14 0 0 1 467.4 375.4" stroke="#000"/><path d="M462 365.5 L472.5 365.5" stroke="#000" stroke-linecap="round"/><path d="M498.6 375.4 A14 14 0 1 1 520.6 358.5" stroke="url(#kb)"/><path d="M520.6 358.5 A14 14 0 0 1 518.4 375.4" stroke="#000"/><path d="M514.5 362 L521.5 358.0" stroke="#000" stroke-linecap="round"/></g></svg>
<div class="a" style="left:386px;top:388px;width:37px;height:12px;background:#fff;border:1px solid #777"></div>
<div class="a" style="left:438px;top:388px;width:37px;height:12px;background:#fff;border:1px solid #777"></div>
<div class="a" style="left:491px;top:388px;width:37px;height:12px;background:#fff;border:1px solid #777"></div>
<div class="t" style="left:390px;top:389px;font-size:8.5px;color:#333">60.0 Hz</div>
<div class="t" style="left:440px;top:389px;font-size:8.5px;color:#333">-34.0 dB</div>
<div class="t" style="left:505px;top:389px;font-size:8.5px;color:#333">76</div>
<div class="t" style="left:397px;top:402px;font-size:7.5px;color:#333">频率</div>
<div class="t" style="left:450px;top:402px;font-size:7.5px;color:#333">强度</div>
<div class="t" style="left:494px;top:402px;font-size:7.5px;color:#333">干扰变形</div>
<svg class="a" style="left:378px;top:410px" width="162" height="14" viewBox="378 410 162 14"><path d="M382 418 Q 420 420 450 417 Q 500 413 536 415" fill="none" stroke="#e8323a" stroke-width="4.8" stroke-linecap="round"/></svg>

</body></html>
